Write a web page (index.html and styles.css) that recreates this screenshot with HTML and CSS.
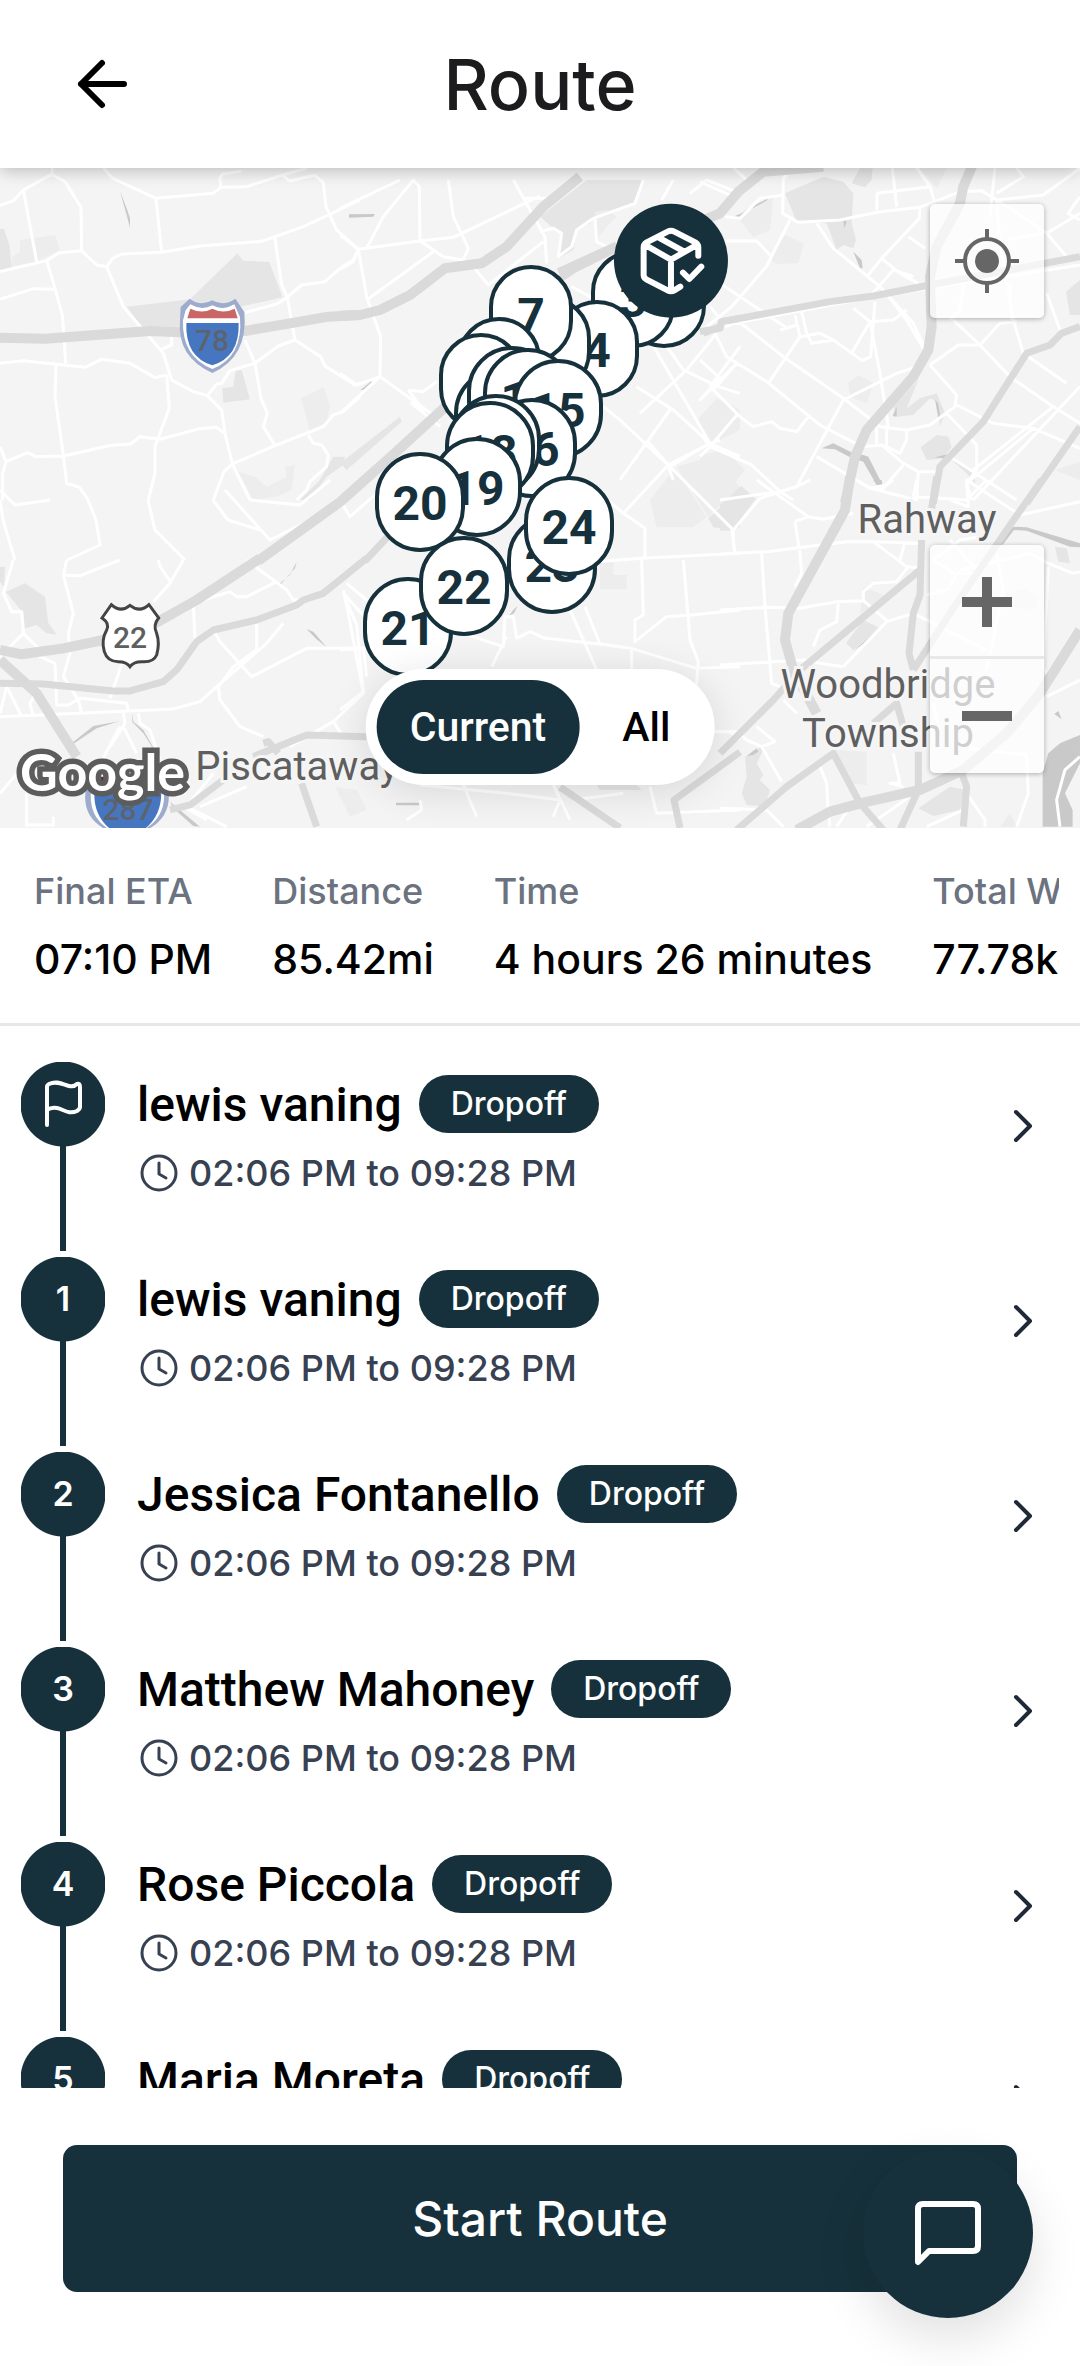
FILE: index.html
```html
<!DOCTYPE html>
<html lang="en">
<head>
  <meta charset="UTF-8" />
  <meta name="viewport" content="width=device-width, initial-scale=1" />
  <title>Route</title>
  <link rel="stylesheet" href="styles.css">
</head>
<body>
<header>
  <button class="back" aria-label="Back">
    <svg width="52" height="52" viewBox="0 0 52 52"><path d="M48 26H5M26 5 5 26l21 21"/></svg>
  </button>
  <h1>Route</h1>
</header>

<section class="map" aria-label="Map">
  <svg class="map-canvas" viewBox="0 168 1080 660" preserveAspectRatio="xMidYMid slice">
    <defs>
      <rect id="pin1" x="-40" y="-47" width="80" height="94" rx="40"/>
      <rect id="pin2" x="-43" y="-48" width="86" height="96" rx="43"/>
    </defs>

    <!-- parks -->
    <g class="park">
      <g transform="translate(0 160) scale(.3333)">
        <path d="M380 440 570 418 712 280 730 302 808 306 848 412 730 438 540 500H425ZM0 207H12L28 255 36 325 0 330ZM667 685 700 680 707 632 725 630 750 718 670 728ZM900 1020 960 960 1000 890 1035 890 1030 915 980 950 930 1020Z"/>
        <path class="light" d="M60 240 165 225 180 270 110 305 36 320 36 290 60 275ZM903 715 972 682 990 740 980 785 930 812ZM715 935 765 950 800 980 860 950 855 920 885 915 875 990 830 1010 760 1020Z"/>
      </g>
      <g transform="translate(340 180) scale(.3333)">
        <path d="M600 110 740 0H910L880 70 765 110 750 130 710 150 700 210 655 235 665 160 640 145ZM0 850 180 710 185 725 100 800 20 870Z"/>
        <path class="light" d="M765 95 800 90 830 110 800 140 765 185ZM1070 720 1150 660 1200 690V750L1100 800Z"/>
      </g>
      <g transform="translate(700 160) scale(.3333)">
        <path d="M255 100 370 50 430 65 460 100 455 190 468 240 460 265 430 255 410 270 380 190 290 185ZM455 70 480 25H518L515 60 495 82ZM580 740 590 770 640 765 690 715 715 725 720 800 735 760 710 700 660 715 620 745 655 660ZM662 862 710 825 745 830 755 860 730 895 680 900ZM755 900 825 935V970L800 940ZM1098 395 1140 360V465H1110ZM65 1020 125 978 170 1020Z"/>
        <path class="light" d="M115 175 220 110 210 210 160 232ZM255 225 312 250 295 310 230 312 210 295ZM0 770 50 715 100 740 45 800 50 835 0 810ZM445 670 475 645 520 670 500 730 450 710ZM0 885 75 870 135 930 65 1020H0ZM660 25H740L710 85ZM1065 930 1140 905V960Z"/>
      </g>
      <g transform="translate(720 480) scale(.3333)">
        <path d="M0 70 60 20 107 57 35 152H0ZM378 490 430 420 480 445 400 510ZM75 830 140 790 110 850 130 885 120 900 150 930 135 980 80 975 65 940 80 890ZM595 985 690 920 740 930 720 990 640 1008ZM1005 200 1040 205 1050 250 1015 245Z"/>
        <path class="light" d="M430 320 490 345 480 370 420 400ZM345 810 440 815V915L380 910ZM860 340 910 325 960 350 945 390 850 375ZM840 1040 870 1000 890 1040Z"/>
      </g>
      <g transform="translate(0 560) scale(.3333)">
        <path d="M18 95 75 70 135 110 145 190 170 224 140 220 110 195 75 205 70 160ZM0 20 15 20 12 80 0 65Z"/>
        <path class="light" d="M1005 680 1070 690 1100 750 1050 770Z"/>
      </g>
      <g transform="translate(340 440) scale(.3333)">
        <path d="M1105 235 1200 150V260L1175 270 1120 262ZM770 1035H890L905 1050H780Z"/>
        <path class="light" d="M930 180 1005 85 1100 230 1060 262H950ZM1010 80 1110 50 1200 140 1105 230ZM780 365H820V405H860V448H780Z"/>
      </g>
    </g>

    <!-- water and rail yards -->
    <g class="water">
      <g transform="translate(0 160) scale(.3333)"><path d="M360 94 380 145 390 175V203L380 165ZM500 472 525 490ZM1047 163 1125 162 1120 170 1047 173Z"/></g>
      <g transform="translate(340 180) scale(.3333)"><path d="M62 630 95 602 98 610 72 630Z"/></g>
      <g transform="translate(700 160) scale(.3333)"><path d="M88 175 125 160 145 145 205 115 200 122 140 155 120 178ZM365 865 400 850 460 880 490 885 505 890 548 975 530 975 490 905 450 892 405 868ZM705 718 715 730 720 765 715 775ZM578 768 590 740 590 770ZM703 892 748 882 730 895ZM430 175 440 185 432 205ZM460 275 485 300 488 325 480 325Z"/></g>
      <g transform="translate(720 480) scale(.3333)"><path d="M830 192 880 140 920 142 1080 190V202L1050 200 920 152 882 150 848 194ZM968 1040V880L985 820 1020 790 1080 765V850L1035 940 1058 990V1040ZM400 512 502 425 430 492ZM1003 702 1015 693 1025 718ZM80 828 110 805 115 815 100 825ZM460 0H485L487 12 470 14Z"/></g>
      <g transform="translate(0 560) scale(.3333)"><path d="M828 80 870 45 890 5 885 25 845 70ZM920 208 940 215 980 262 950 238ZM215 550 280 498 358 484 290 505 215 555ZM397 460V486L430 520 465 575 475 590 430 510 400 485ZM510 725 600 800 580 798 520 745Z"/></g>
      <g transform="translate(340 440) scale(.3333)"><path d="M507 528 520 510 533 497 522 520ZM168 1088H240V1096H168Z"/></g>
    </g>

    <!-- local streets -->
    <g class="street">
      <g transform="translate(0 160) scale(.3333)">
        <path d="M0 137 40 122 70 90 155 43 160 0M155 43 195 65 243 142 245 272 290 315 320 320 370 440 490 580 515 660 580 695 622 707 665 750 675 820 697 912 750 1020M70 90 110 305M0 335 140 302 178 278 245 272M0 418 100 386 163 388M140 302 165 385 187 465 197 610M310 24 338 55 468 115 640 100 662 82 740 80 848 45 920 24M468 115 485 277M320 320 338 295 365 282 485 277 600 258 785 244 910 200 992 162 1080 120M662 82 660 55 668 42 724 34M848 45 868 63 945 46 970 68 978 140 1010 210 1075 268 1060 300 1020 325 975 365 905 375 862 412 830 432 735 458M825 235 845 375 862 412 885 540 962 590 975 618 1065 675 1080 670M885 540 835 558 765 610 690 632 665 670 650 672 622 707M735 540 765 610 783 715 802 760 790 800 825 857M0 610 70 602 255 622 305 598 390 610 465 653 500 645M168 610 165 710 190 885 200 970 238 982 265 1020M500 645 508 745 465 860 465 940 445 1020M18 905 83 878 108 890 190 888 335 856 392 852 420 830 480 838 600 806 648 802 675 820M0 860 18 905 8 940V1020M640 1020 672 935 697 912 825 857 970 800 1000 765 1030 755 1080 710M925 825 940 850 965 855 985 885 980 920 930 965 920 990 890 1020M485 568 515 555 515 530"/>
      </g>
      <g transform="translate(340 180) scale(.3333)">
        <path d="M0 85 180 0M55 208 240 183 340 172 600 48M55 208 80 350 122 470 120 590 300 720M0 165 55 208 40 245 0 268M80 205 130 110 220 0 238 20 240 183 310 230 370 240 385 205 340 110 325 0M80 360 280 215M400 260 445 315 610 185M520 0 615 170 620 250M600 155 640 145 665 160 655 230 695 200 710 150 760 115 885 70 910 0M765 110 770 185 830 215M550 55H620M965 60 1000 0M1050 40 1100 0 1200 40M120 590 50 615 0 580M120 590 0 700M205 630 250 635 290 605M205 630 250 690 215 670 300 740M695 320 760 355M890 370 1030 570 1135 620 1200 640M900 430 1110 790 990 860 840 720 790 680M890 620 1000 690 1110 790 1200 830M990 690 840 900M1130 460 1040 570 900 700M1200 500 1110 620M985 860 1000 900M1110 380 1160 440 1200 420"/>
      </g>
      <g transform="translate(700 160) scale(.3333)">
        <path d="M270 35 250 55 248 160 295 187 420 180 540 155 660 142 780 95 845 92 890 120 1030 105 1140 25M0 65 100 110 145 65M75 170 120 175 180 115 250 105M100 24 145 65M270 180 200 318 95 440 20 500M80 243H170L210 285M350 190 400 265 540 380 640 490 675 565M660 142 658 175 545 295 505 345M530 150 532 100 690 80 650 24M577 24 590 140M690 80 705 130M625 230 675 265M545 295 600 340 655 370M500 420 580 330 640 350M0 510 420 430 690 385 1140 315M60 370 255 500M110 480 250 590 430 715 540 800M45 520 80 590 200 665 360 795 485 860 545 855 610 910 655 935 715 935M0 600 60 655 0 720 30 690 110 610 40 690 120 770 160 800 215 785 240 805 290 815 325 770M205 670 300 530 285 465M305 455 320 520 335 550 400 540 487 602 512 590 525 425M510 485 540 640 565 800M460 445 510 485 455 580M240 510 290 495M300 530 360 520 400 540M570 415 620 480 670 565M510 485 580 480 620 450M115 760 30 860 0 890M0 820 30 860 155 915 240 995 290 980 430 720 590 640 650 620M350 890 510 985H550L610 915M690 615 775 555 840 555 900 490 950 485M690 615 770 705 765 740 690 795 620 810 540 800M760 480 840 555 930 650 1060 740 1140 790M770 735 880 790 1000 805 1140 865M1000 805 800 970M1060 740 820 930M820 1020 1140 680M740 760 830 855V930L800 970 815 1020M620 810V840L600 880 560 860V795M530 855V800M510 985 650 1020 655 935M870 170 885 24M890 120 960 165 1040 220 1140 160M950 24 970 50 890 100M1140 110 1105 160 1140 180M1040 220 1100 290M890 120 900 250 940 480 970 580 1100 670M920 240 1030 220M1040 400 1080 510M930 370 935 480M790 375 780 450 750 480M240 995 280 1020M60 1020 240 995M750 890 950 1020"/>
      </g>
      <g transform="translate(720 480) scale(.3333)">
        <path d="M0 222 140 215 380 185 460 185 600 190M40 150V190L45 215M40 150 120 55 230 20 270 0M125 220 135 380 155 610 180 620M0 390 140 382 240 385 350 365 430 362 505 425M225 125 240 220 245 280 225 320M225 125 265 110 310 118 400 100M110 0 265 110M0 555 250 540 300 550 370 560M370 560 500 425 580 400 720 470 800 510M280 500 300 450 350 425 355 370M430 360 430 335 460 310 530 305 565 260 600 265M460 185 560 260M540 240 555 185M410 0 450 25 500 15 520 0M580 50 660 55 740 60 800 0M590 0 580 50M690 180 780 280 710 280 690 320M690 60 745 80 740 0 900 105 1080 65M780 170 720 180 640 240 700 280M620 345 690 325M720 270 930 220 985 250 1060 280 1080 275M830 220 850 330 800 570M985 260 970 560 990 600M980 650 1080 600M110 740 165 785 125 800 185 905M0 755H50L80 780 125 800M190 660 230 700M0 985 140 990 190 1040M300 860 320 910 325 1000 330 1040M440 1040 570 950 640 900M520 820 540 910 510 910 550 920M740 940 795 1020V1040M640 670 660 760 700 800 920 825M920 825 925 940 890 1040M620 1040 730 990M350 1040 390 980M1080 830 1035 870 1010 960 1020 1040"/>
      </g>
      <g transform="translate(0 560) scale(.3333)">
        <path d="M40 0 25 50 10 100 35 155H65L70 220 0 290M200 0 190 45 220 160 205 220 210 280 190 350 235 420 245 460M190 45 240 47 360 0M550 0 510 70 460 125M475 0 480 20 515 70M70 220 120 270V290L165 310 170 435H205L240 415 380 430 385 455M370 300 330 415M0 470 520 447 600 425 650 380 800 250 850 190M580 130 690 95 710 110 740 110 830 65M580 130 585 240M740 0 860 90 880 120 900 120M770 190 770 270 700 320 655 380 660 420 720 500 790 530M640 210 660 245 755 350 920 265 1100 265M1040 70 1100 120M1030 90 1045 160 1090 400 1000 485 870 560M1000 485 1030 530M20 380 0 460M20 380 65 470M120 380 90 430 100 470M370 460 375 490 330 560M360 500 290 630M370 500 410 580M415 460 420 490 450 510 480 600M80 700V800M80 795H160V770M600 740 740 680M640 640 560 740 680 800M560 745 620 780M0 700 60 630"/>
      </g>
      <g transform="translate(340 440) scale(.3333)">
        <path d="M0 180 30 230 110 160M10 460 50 555 70 755 0 810M10 460 100 560M0 630 70 625 80 710M340 570 490 620 495 530 520 530 530 595 570 575 615 595 780 612 875 625 1070 685 1200 680M500 590 455 680M690 510 770 690M735 500 780 612M770 365 905 355 1200 340M905 355 910 525 885 540 885 605 980 530 1055 525 1200 510M1030 360 1050 600 1075 665 1070 730 1050 760M850 220 915 265V350M850 220 780 160M850 220 985 75 1110 10 1140 0M920 0 985 75 1175 265 1185 340M875 625V690M1115 875H1170L1200 900M240 1080 245 1110 200 1140M370 1035 410 1130M240 1035 500 1060 660 1080 640 1130M640 1035 690 1140M930 1040 950 1120 1200 1110M700 1080 850 1060"/>
      </g>
      <!-- blocks between y=490 and y=560 on the left side -->
      <path d="M15 560 3 520 0 500M0 490 15 505 50 500M88 500 96 520 100 545 67 560M148 500 155 530 185 560M213 500 228 520 260 530M225 490 270 540 310 520M250 500 300 505 330 480"/>
    </g>

    <!-- highways -->
    <g class="highway">
      <g transform="translate(0 160) scale(.3333)"><path class="wide" d="M0 533 135 536 450 513 540 517 735 513 870 490 985 470 1080 465"/></g>
      <g transform="translate(340 180) scale(.3333)">
        <path class="wide" d="M0 407 60 405 120 390 210 345 315 265 425 250 500 200 610 80 720-10"/>
        <path d="M655 275 830 195M655 300 700 270 860 190M1090 460 1140 440 1145 425 1200 415M1080 130 1140 95 1200 30"/>
      </g>
      <g transform="translate(700 160) scale(.3333)">
        <path class="wide" d="M0 185 60 160 115 95 190 35 370 20M820 10 790 80 780 130 710 260 690 350 695 500 685 570 640 650 500 810 465 890 435 1030"/>
        <path d="M0 515 60 505 65 485 390 425 520 408 690 375 1140 290M1140 500 1085 520 1050 555 980 580 910 690 850 785 720 920 700 1030M1140 800 980 1030"/>
      </g>
      <g transform="translate(720 480) scale(.3333)">
        <path class="wide" d="M390-10 375 90 205 400 195 480 220 570 290 700"/>
        <path class="wide" d="M230 1050 330 995 430 968 600 930 730 870 860 760 960 640 1080 450"/>
        <path d="M650-10 635 85M965 0 860 150 690 400 580 570M580 570 567 520 580 400 600 345 605 180M600 270 240 570 160 660 0 820M460 730 530 670 550 740M50 1050 200 920 340 820 420 970 490 1050M595 815V930L540 1050M725 880 740 920 730 1040"/>
      </g>
      <g transform="translate(0 560) scale(.3333)">
        <path class="wide" d="M0 270 65 283 190 265 310 240 475 185 590 120 780-5M0 300 110 400 230 590"/>
        <path d="M0 370 130 372 340 393 390 393 490 365 530 330 590 245 640 210 770 180 890 135 910 120 970 100 1100-5M760 590 920 525 1100 530M510 750 570 735 670 660M905 670 950 800"/>
        <path d="M790 550 805 545 835 580"/>
      </g>
      <path class="wide" d="M258 561 340 502 395 453 455 398"/>
      <path d="M365 561 395 529 460 465M560 787 620 828M740 752 674 800 680 828"/>
    </g>

    <!-- route shields -->
    <g transform="translate(180 327)">
      <g transform="scale(.3333)">
        <path class="shield-rim" d="M542 440 569 415Q602 440 637 420 670 440 706 415L733 455Q745 590 637 638 530 590 540 480Z" transform="translate(-540 -500)"/>
        <path class="shield-white" d="M557 450 571 432Q605 452 637 435 668 452 703 432L720 470Q730 590 637 626 545 590 549 480Z" transform="translate(-540 -500)"/>
        <path class="shield-red" d="M562 474 571 445Q607 462 637 445 670 462 704 445L713 474Z" transform="translate(-540 -500)"/>
        <path class="shield-blue" d="M559 488H716Q719 590 637 615 555 590 559 488Z" transform="translate(-540 -500)"/>
      </g>
      <text class="shield-text" x="32" y="24">78</text>
    </g>
    <g transform="translate(0 560) scale(.3333)">
      <path class="shield-us" d="M306 174 334 134Q362 160 390 136 420 160 447 134L476 174Q458 195 470 220 480 250 470 285 460 308 425 305 400 305 390 320 380 305 355 305 322 305 313 275 303 240 320 210 330 190 306 174Z"/>
    </g>
    <text class="shield-text dark" x="130" y="648">22</text>
    <g transform="translate(0 560) scale(.3333)">
      <path class="shield-rim" d="M275 630H490Q540 760 440 810H320Q220 760 275 630Z"/>
      <path class="shield-white" d="M285 640H480Q520 760 430 810H330Q245 760 285 640Z"/>
      <path class="shield-red dim" d="M295 650H475L482 682H285Z"/>
      <path class="shield-blue" d="M283 694H484Q485 770 430 810H335Q280 770 283 694Z"/>
    </g>
    <text class="shield-text" x="128" y="820">287</text>

    <!-- places -->
    <g class="place">
      <text x="927" y="533">Rahway</text>
      <text x="888" y="698">Woodbridge</text>
      <text x="888" y="747">Township</text>
      <text x="297" y="780">Piscataway</text>
    </g>
    <text class="google" x="20" y="791">Google</text>

    <!-- stops, first stop at the bottom of the pile -->
    <g class="stops">
      <g transform="translate(664 299)"><use href="#pin1"/></g>
      <g transform="translate(633 299)"><use href="#pin1"/><text y="18">3</text></g>
      <g transform="translate(597 349)"><use href="#pin1"/><text y="18">4</text></g>
      <g transform="translate(549 345)"><use href="#pin1"/></g>
      <g transform="translate(531 314)"><use href="#pin1"/><text y="18">7</text></g>
      <g transform="translate(499 366)"><use href="#pin1"/></g>
      <g transform="translate(481 382)"><use href="#pin1"/></g>
      <g transform="translate(499 418)"><use href="#pin2"/></g>
      <g transform="translate(512 396)"><use href="#pin2"/></g>
      <g transform="translate(528 398)"><use href="#pin2"/><text y="18">14</text></g>
      <g transform="translate(558 409)"><use href="#pin2"/><text y="18">15</text></g>
      <g transform="translate(532 448)"><use href="#pin2"/><text y="18">16</text></g>
      <g transform="translate(496 444)"><use href="#pin2"/></g>
      <g transform="translate(490 451)"><use href="#pin2"/><text y="18">18</text></g>
      <g transform="translate(477 487)"><use href="#pin2"/><text y="18">19</text></g>
      <g transform="translate(420 502)"><use href="#pin2"/><text y="18">20</text></g>
      <g transform="translate(408 627)"><use href="#pin2"/><text y="18">21</text></g>
      <g transform="translate(464 586)"><use href="#pin2"/><text y="18">22</text></g>
      <g transform="translate(552 564)"><use href="#pin2"/><text y="18">23</text></g>
      <g transform="translate(569 526)"><use href="#pin2"/><text y="18">24</text></g>
    </g>
    <g class="depot" transform="translate(340 180) scale(.3333)">
      <circle cx="993" cy="242" r="171"/>
      <path d="M1075 227V202Q1075 192 1066 187L1003 155Q993 150 983 155L920 187Q911 192 911 202V285Q911 293 919 298L983 331Q993 337 1003 331L1021 320M914 194 993 239 1072 194M993 239V332M955 172 1033 215M1029 278 1048 297 1084 260"/>
    </g>
  </svg>

  <button class="map-button locate" aria-label="My location">
    <svg width="64" height="64" viewBox="0 0 64 64"><circle cx="32" cy="32" r="22" fill="none" stroke="#666" stroke-width="4"/><circle cx="32" cy="32" r="12" fill="#666"/><path d="M32 0v9M32 55v9M0 32h9M55 32h9" stroke="#666" stroke-width="4"/></svg>
  </button>
  <div class="zoom">
    <button class="map-button" aria-label="Zoom in">
      <svg width="50" height="50" viewBox="0 0 50 50"><path d="M25 0v50M0 25h50" stroke="#666" stroke-width="10"/></svg>
    </button>
    <button class="map-button" aria-label="Zoom out">
      <svg width="50" height="50" viewBox="0 0 50 50"><path d="M0 25h50" stroke="#666" stroke-width="10"/></svg>
    </button>
  </div>
  <div class="toggle">
    <button class="active">Current</button>
    <button>All</button>
  </div>
</section>

<section class="summary">
  <dl>
    <div><dt>Final ETA</dt><dd>07:10 PM</dd></div>
    <div><dt>Distance</dt><dd>85.42mi</dd></div>
    <div><dt>Time</dt><dd>4 hours 26 minutes</dd></div>
    <div><dt>Total Weight</dt><dd>77.78kg</dd></div>
  </dl>
</section>

<main>
  <svg width="0" height="0" class="symbols">
    <symbol id="clock" viewBox="0 0 38 38"><circle cx="19" cy="19" r="17"/><path d="M19 9v11l7 4"/></symbol>
    <symbol id="chevron" viewBox="0 0 20 34"><path d="m3 3 14 14L3 31"/></symbol>
  </svg>

  <a class="stop" href="#">
    <span class="num"><svg width="40" height="48" viewBox="0 0 40 48"><path d="M4 45V7Q4 5 6 4C14 0 21 5 26 6 30 7 33 5 34 4Q37 3 37 7V27Q37 29 34 31C26 35 20 29 14 28Q8 27 4 30"/></svg></span>
    <span class="info">
      <span class="name">lewis vaning <span class="badge">Dropoff</span></span>
      <span class="time"><svg width="38" height="38"><use href="#clock"/></svg>02:06 PM to 09:28 PM</span>
    </span>
    <svg class="chevron" width="20" height="34"><use href="#chevron"/></svg>
  </a>
  <a class="stop" href="#">
    <span class="num">1</span>
    <span class="info">
      <span class="name">lewis vaning <span class="badge">Dropoff</span></span>
      <span class="time"><svg width="38" height="38"><use href="#clock"/></svg>02:06 PM to 09:28 PM</span>
    </span>
    <svg class="chevron" width="20" height="34"><use href="#chevron"/></svg>
  </a>
  <a class="stop" href="#">
    <span class="num">2</span>
    <span class="info">
      <span class="name">Jessica Fontanello <span class="badge">Dropoff</span></span>
      <span class="time"><svg width="38" height="38"><use href="#clock"/></svg>02:06 PM to 09:28 PM</span>
    </span>
    <svg class="chevron" width="20" height="34"><use href="#chevron"/></svg>
  </a>
  <a class="stop" href="#">
    <span class="num">3</span>
    <span class="info">
      <span class="name">Matthew Mahoney <span class="badge">Dropoff</span></span>
      <span class="time"><svg width="38" height="38"><use href="#clock"/></svg>02:06 PM to 09:28 PM</span>
    </span>
    <svg class="chevron" width="20" height="34"><use href="#chevron"/></svg>
  </a>
  <a class="stop" href="#">
    <span class="num">4</span>
    <span class="info">
      <span class="name">Rose Piccola <span class="badge">Dropoff</span></span>
      <span class="time"><svg width="38" height="38"><use href="#clock"/></svg>02:06 PM to 09:28 PM</span>
    </span>
    <svg class="chevron" width="20" height="34"><use href="#chevron"/></svg>
  </a>
  <a class="stop" href="#">
    <span class="num">5</span>
    <span class="info">
      <span class="name">Maria Moreta <span class="badge">Dropoff</span></span>
      <span class="time"><svg width="38" height="38"><use href="#clock"/></svg>02:06 PM to 09:28 PM</span>
    </span>
    <svg class="chevron" width="20" height="34"><use href="#chevron"/></svg>
  </a>
</main>

<footer>
  <button class="start">Start Route</button>
  <button class="chat" aria-label="Messages">
    <svg width="68" height="66" viewBox="0 0 68 66"><path d="M4 62V9Q4 4 9 4H59Q64 4 64 9V46Q64 51 59 51H15Z"/></svg>
  </button>
</footer>
</body>
</html>
```

FILE: styles.css
```css
:root {
  --navy: #16313b;
  --grey: #6b7280;
  --line: #e5e7eb;
}
* {
  box-sizing: border-box;
}
body {
  margin: 0;
  height: 100vh;
  display: flex;
  flex-direction: column;
  font-family: Inter, "Liberation Sans", sans-serif;
  background: #fff;
  color: #000;
}
button {
  border: none;
  padding: 0;
  background: none;
  font: inherit;
  color: inherit;
  cursor: pointer;
}

/* header */
header {
  flex: none;
  height: 168px;
  padding: 0 76px;
  display: grid;
  grid-template-columns: 52px 1fr 52px;
  align-items: center;
  background: #fff;
  box-shadow: 0 2px 16px rgba(0, 0, 0, 0.25);
  z-index: 1;
}
.back {
  display: flex;
}
.back svg {
  fill: none;
  stroke: #000;
  stroke-width: 6;
  stroke-linecap: round;
  stroke-linejoin: round;
}
h1 {
  margin: 0;
  text-align: center;
  font-size: 70px;
  font-weight: 500;
  color: #1c1c1e;
}

/* map */
.map {
  flex: none;
  height: 660px;
  position: relative;
  overflow: hidden;
  background: #f4f4f4;
}
.map-canvas {
  display: block;
  width: 100%;
  height: 100%;
}
.map-canvas path {
  vector-effect: non-scaling-stroke;
}
.park {
  fill: #e5e5e5;
}
.park .light {
  fill: #ededed;
}
.water {
  fill: #c9c9c9;
}
.street {
  fill: none;
  stroke: #fff;
  stroke-width: 3;
  stroke-linejoin: round;
}
.highway {
  fill: none;
  stroke: #dadada;
  stroke-width: 7;
  stroke-linejoin: round;
}
.highway .wide {
  stroke-width: 10;
}
.shield-rim {
  fill: #9dabcc;
}
.shield-white {
  fill: #fff;
}
.shield-red {
  fill: #c96666;
}
.shield-red.dim {
  fill: #6b2c2c;
}
.shield-blue {
  fill: #4776c1;
}
.shield-us {
  fill: #fff;
  stroke: #444;
  stroke-width: 3;
}
.shield-text {
  font: 500 30px Roboto, sans-serif;
  text-anchor: middle;
  fill: #5b646e;
}
.shield-text.dark {
  fill: #5f5f5f;
}
.place {
  font: 400 40px Roboto, sans-serif;
  text-anchor: middle;
  fill: #5f5f5f;
  stroke: #f5f5f5;
  stroke-width: 6;
  paint-order: stroke;
}
.google {
  font: 700 52px Lato, sans-serif;
  fill: #fff;
  stroke: #5c5c5c;
  stroke-width: 11;
  paint-order: stroke;
}
.stops {
  font: 700 48px Roboto, sans-serif;
  text-anchor: middle;
  fill: var(--navy);
}
.stops use {
  fill: #fff;
  stroke: var(--navy);
  stroke-width: 4;
}
.depot circle {
  fill: var(--navy);
}
.depot path {
  fill: none;
  stroke: #fff;
  stroke-width: 6;
  stroke-linecap: round;
  stroke-linejoin: round;
}
.map-button {
  width: 114px;
  height: 114px;
  display: flex;
  align-items: center;
  justify-content: center;
}
.locate,
.zoom {
  position: absolute;
  right: 36px;
  border-radius: 5px;
  background: rgba(255, 255, 255, 0.7);
  box-shadow: 0 1px 5px rgba(0, 0, 0, 0.3);
}
.locate {
  top: 36px;
}
.zoom {
  bottom: 55px;
}
.zoom .map-button + .map-button {
  box-shadow: 0 -3px #e8e8e8;
}
.toggle {
  position: absolute;
  left: 50%;
  bottom: 43px;
  transform: translateX(-50%);
  display: flex;
  gap: 10px;
  padding: 11px;
  border-radius: 58px;
  background: #fff;
  box-shadow: 0 6px 40px rgba(0, 0, 0, 0.12);
  font: 500 41px Roboto, sans-serif;
}
.toggle button {
  height: 94px;
  padding: 0 33px;
  border-radius: 47px;
}
.toggle .active {
  background: var(--navy);
  color: #fff;
}

/* trip summary */
.summary {
  flex: none;
  padding: 41px 21px 38px 34px;
  border-bottom: 3px solid var(--line);
}
.summary dl {
  display: flex;
  gap: 60px;
  margin: 0;
  overflow: hidden;
  white-space: nowrap;
}
.summary dt {
  font-size: 36px;
  line-height: 44px;
  font-weight: 500;
  color: var(--grey);
}
.summary dd {
  margin: 20px 0 0;
  font-size: 41px;
  line-height: 52px;
  font-weight: 500;
}

/* stops */
main {
  flex: 1;
  min-height: 0;
  overflow: hidden;
  padding-top: 36px;
}
.symbols {
  display: block;
}
.stop {
  display: flex;
  height: 195px;
  padding: 0 47px 0 21px;
  color: inherit;
  text-decoration: none;
}
.stop svg {
  fill: none;
  stroke-linecap: round;
  stroke-linejoin: round;
}
.num {
  display: flex;
  flex-direction: column;
  align-items: center;
  flex: none;
  width: 84px;
  height: 189px;
  margin-right: 32px;
  line-height: 84px;
  font-size: 34px;
  font-weight: 600;
  color: #fff;
  background:
    radial-gradient(circle at 42px 42px, var(--navy) 42px, transparent 43px),
    linear-gradient(var(--navy), var(--navy)) 50% 80px / 6px 109px no-repeat;
}
.num svg {
  margin: 18px 0;
  stroke: #fff;
  stroke-width: 4;
}
.info {
  flex: 1;
}
.name {
  display: flex;
  align-items: center;
  gap: 17px;
  height: 84px;
  font: 500 48px Roboto, sans-serif;
}
.badge {
  padding: 0 32px;
  border-radius: 29px;
  background: var(--navy);
  color: #fff;
  font: 500 32px/58px Inter, sans-serif;
}
.time {
  display: flex;
  align-items: center;
  gap: 11px;
  height: 54px;
  padding-left: 3px;
  font-size: 36px;
  font-weight: 500;
  color: #374151;
}
.time svg {
  stroke: #374151;
  stroke-width: 3;
}
.chevron {
  margin-top: 47px;
  stroke: #1f2937;
  stroke-width: 4;
}

/* footer */
footer {
  flex: none;
  position: relative;
  padding: 57px 63px 74px;
}
.start {
  display: block;
  width: 100%;
  height: 147px;
  border-radius: 14px;
  background: var(--navy);
  color: #fff;
  font-size: 48px;
  font-weight: 500;
}
.chat {
  position: absolute;
  right: 47px;
  bottom: 48px;
  width: 170px;
  height: 170px;
  display: flex;
  align-items: center;
  justify-content: center;
  border-radius: 50%;
  background: var(--navy);
  box-shadow: 0 20px 50px rgba(0, 0, 0, 0.12);
}
.chat svg {
  fill: none;
  stroke: #fff;
  stroke-width: 6;
  stroke-linejoin: round;
}
```
